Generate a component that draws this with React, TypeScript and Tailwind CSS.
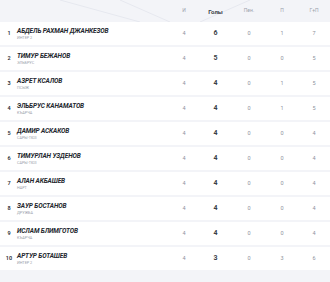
import React from 'react';

interface Scorer {
  pos: number;
  name: string;
  team: string;
  games: number;
  goals: number;
  pens: number;
  assists: number;
  total: number;
}

const scorers: Scorer[] = [
  { pos: 1, name: 'Абдель Рахман Джанкезов', team: 'Интер 2', games: 4, goals: 6, pens: 0, assists: 1, total: 7 },
  { pos: 2, name: 'Тимур Бежанов', team: 'Эльбрус', games: 4, goals: 5, pens: 0, assists: 0, total: 5 },
  { pos: 3, name: 'Азрет Ксалов', team: 'Псыж', games: 4, goals: 4, pens: 0, assists: 1, total: 5 },
  { pos: 4, name: 'Эльбрус Канаматов', team: 'Къарча', games: 4, goals: 4, pens: 0, assists: 1, total: 5 },
  { pos: 5, name: 'Дамир Аскаков', team: 'Сары-Тюз', games: 4, goals: 4, pens: 0, assists: 0, total: 4 },
  { pos: 6, name: 'Тимурлан Узденов', team: 'Сары-Тюз', games: 4, goals: 4, pens: 0, assists: 0, total: 4 },
  { pos: 7, name: 'Алан Акбашев', team: 'Нарт', games: 4, goals: 4, pens: 0, assists: 0, total: 4 },
  { pos: 8, name: 'Заур Бостанов', team: 'Дружба', games: 4, goals: 4, pens: 0, assists: 0, total: 4 },
  { pos: 9, name: 'Ислам Блимготов', team: 'Къарча', games: 4, goals: 4, pens: 0, assists: 0, total: 4 },
  { pos: 10, name: 'Артур Боташев', team: 'Интер 2', games: 4, goals: 3, pens: 0, assists: 3, total: 6 },
];

const cols = 'grid grid-cols-[17px_1fr_30px_33px_34px_32px_32px] items-center';

const App = () => {
  return (
    <div className="relative w-[330px] h-[282px] overflow-hidden bg-[#f3f4f8] font-['Roboto',sans-serif]">
      <svg className="absolute left-0 top-0" width="330" height="60" viewBox="0 0 330 60">
        <path d="M60 0 L140 22 M120 0 L170 22 M250 0 L200 22" stroke="#e6e8ef" strokeWidth="1" fill="none" />
      </svg>
      <div className="relative">
        <div className={`${cols} h-[22px] text-[5px] text-[#9aa0ab]`}>
          <div />
          <div />
          <div className="text-center">И</div>
          <div className="text-center text-[6px] font-bold text-[#3a3f48]">Голы</div>
          <div className="text-center">Пен.</div>
          <div className="text-center">П</div>
          <div className="text-center">Г+П</div>
        </div>
        <div className="flex flex-col gap-[2px]">
          {scorers.map((s) => (
            <div key={s.pos} className={`${cols} h-[23px] bg-white`}>
              <div className="text-center text-[5.5px] font-semibold text-[#2b2f36] pl-[1px]">{s.pos}</div>
              <div className="flex flex-col leading-none">
                <span className="text-[6.5px] font-bold italic uppercase text-[#23272e] tracking-[-0.1px]">{s.name}</span>
                <span className="mt-[1.5px] text-[3.8px] uppercase text-[#9aa0ab]">{s.team}</span>
              </div>
              <div className="text-center text-[5.5px] text-[#8e939d]">{s.games}</div>
              <div className="text-center text-[7px] font-bold text-[#3a3f48]">{s.goals}</div>
              <div className="text-center text-[5.5px] text-[#8e939d]">{s.pens}</div>
              <div className="text-center text-[5.5px] text-[#8e939d]">{s.assists}</div>
              <div className="text-center text-[5.5px] text-[#8e939d]">{s.total}</div>
            </div>
          ))}
        </div>
      </div>
    </div>
  );
};

export default App;
